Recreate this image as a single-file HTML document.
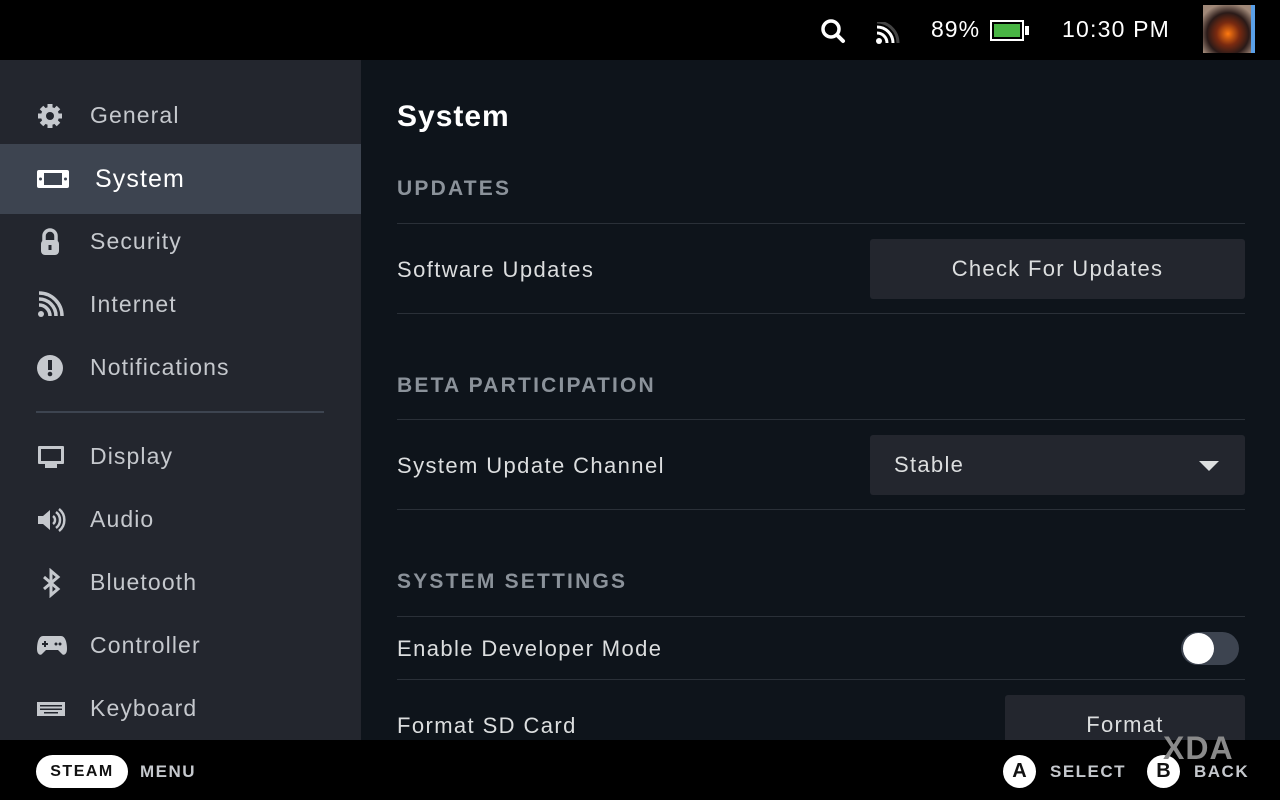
<!DOCTYPE html>
<html><head><meta charset="utf-8"><style>
*{margin:0;padding:0;box-sizing:border-box}
body{width:1280px;height:800px;overflow:hidden;background:#0e141b;font-family:"Liberation Sans","DejaVu Sans",sans-serif;position:relative;color:#dcdedf}
.top{position:absolute;left:0;top:0;width:1280px;height:60px;background:#000}
.side{position:absolute;left:0;top:60px;width:361px;height:680px;background:#23262e}
.item{position:absolute;left:0;width:361px;height:63px;display:flex;align-items:center;font-size:23px;color:#c5c8cd;letter-spacing:1.1px}
.item svg{position:absolute;left:36px}
.item span{position:absolute;left:90px}
.sel{background:#3d4450;color:#fff;height:70px}
.sel span{left:95px;font-size:25px}
.bot{position:absolute;left:0;top:740px;width:1280px;height:60px;background:#000}
.main{position:absolute;left:397px;top:60px;width:848px}
.h1{position:absolute;top:40px;font-size:30px;font-weight:bold;color:#fff;letter-spacing:1px}
.sec{position:absolute;font-size:21px;font-weight:bold;letter-spacing:2.2px;color:#8b929a}
.line{position:absolute;left:0;width:848px;height:1px;background:#2a3038}
.lbl{position:absolute;font-size:22px;color:#dcdedf;letter-spacing:1.4px}
.btn{position:absolute;background:#23262e;border-radius:3px;font-size:22px;color:#dcdedf;display:flex;align-items:center;justify-content:center;letter-spacing:1.3px}
</style></head><body>
<div class="top">
<svg style="position:absolute;left:820px;top:18px" width="26" height="26" viewBox="0 0 26 26"><circle cx="11" cy="11" r="8" stroke="#fff" stroke-width="3.5" fill="none"/><path d="M17 17l6 6" stroke="#fff" stroke-width="4" stroke-linecap="round"/></svg>
<svg style="position:absolute;left:876px;top:22px" width="24" height="22" viewBox="0 0 24 22"><circle cx="3" cy="19" r="3" fill="#fff"/><path d="M1 11a10 10 0 0 1 10 10M1 5a16 16 0 0 1 16 16" stroke="#fff" stroke-width="3" fill="none"/><path d="M1 0a21 21 0 0 1 21 21" stroke="#444" stroke-width="3" fill="none"/></svg>
<div style="position:absolute;left:931px;top:16px;font-size:23px;color:#fff;letter-spacing:1px">89%</div>
<div style="position:absolute;left:990px;top:20px;width:34px;height:21px;border:2.5px solid #fff;padding:2px"><div style="width:100%;height:100%;background:#49b544"></div></div>
<div style="position:absolute;left:1025px;top:26px;width:4px;height:9px;background:#fff"></div>
<div style="position:absolute;left:1062px;top:16px;font-size:23px;color:#fff;letter-spacing:1.2px">10:30 PM</div>
<div style="position:absolute;left:1203px;top:5px;width:50px;height:48px;background:radial-gradient(circle at 50% 60%,#ff7a10 0,#7a2a10 30%,#2a1a18 55%,#a08878 80%);"></div>
<div style="position:absolute;left:1251px;top:5px;width:4px;height:48px;background:#5aa0e8"></div>
</div>
<div class="side">
<div class="item" style="top:24px"><svg width="28" height="28" viewBox="0 0 28 28"><circle cx="14" cy="14" r="9" fill="#c5c8cd"/><g stroke="#c5c8cd" stroke-width="5"><path d="M14 2v24M2 14h24M5.5 5.5l17 17M22.5 5.5l-17 17"/></g><circle cx="14" cy="14" r="4" fill="#23262e"/></svg><span>General</span></div>
<div class="item sel" style="top:84px"><svg width="34" height="20" viewBox="0 0 34 20"><rect x="1" y="1" width="32" height="18" rx="2" fill="#fff"/><rect x="8" y="4" width="18" height="12" fill="#3d4450"/><circle cx="4.5" cy="10" r="1.5" fill="#3d4450"/><circle cx="29.5" cy="10" r="1.5" fill="#3d4450"/></svg><span>System</span></div>
<div class="item" style="top:150px"><svg width="28" height="30" viewBox="0 0 28 30"><path d="M8 14V9a6 6 0 0 1 12 0v5" stroke="#c5c8cd" stroke-width="3.5" fill="none"/><rect x="5" y="13" width="18" height="15" rx="4" fill="#c5c8cd"/><rect x="12.5" y="18" width="3" height="5" fill="#23262e"/></svg><span>Security</span></div>
<div class="item" style="top:213px"><svg width="28" height="28" viewBox="0 0 28 28"><circle cx="5" cy="23" r="3" fill="#c5c8cd"/><path d="M3 14a11 11 0 0 1 11 11M3 8a17 17 0 0 1 17 17M3 2a23 23 0 0 1 23 23" stroke="#c5c8cd" stroke-width="3.5" fill="none"/></svg><span>Internet</span></div>
<div class="item" style="top:276px"><svg width="28" height="28" viewBox="0 0 28 28"><circle cx="14" cy="14" r="13" fill="#c5c8cd"/><rect x="12" y="6" width="4" height="10" fill="#23262e"/><circle cx="14" cy="20" r="2.3" fill="#23262e"/></svg><span>Notifications</span></div>
<div style="position:absolute;left:36px;top:351px;width:288px;height:2px;background:#3d4450"></div>
<div class="item" style="top:365px"><svg width="30" height="28" viewBox="0 0 30 28"><rect x="2" y="3" width="26" height="18" rx="1" fill="#c5c8cd"/><rect x="5" y="6" width="20" height="12" fill="#23262e"/><rect x="9" y="21" width="12" height="4" fill="#c5c8cd"/></svg><span>Display</span></div>
<div class="item" style="top:428px"><svg width="30" height="28" viewBox="0 0 30 28"><path d="M2 10h5l7-6v20l-7-6H2z" fill="#c5c8cd"/><path d="M17 10a5 5 0 0 1 0 8M20 6a10 10 0 0 1 0 16M23 3a14 14 0 0 1 0 22" stroke="#c5c8cd" stroke-width="2.5" fill="none"/></svg><span>Audio</span></div>
<div class="item" style="top:491px"><svg width="30" height="30" viewBox="0 0 30 30"><path d="M8 9l14 12-7 6V3l7 6-14 12" stroke="#c5c8cd" stroke-width="3" fill="none"/></svg><span>Bluetooth</span></div>
<div class="item" style="top:554px"><svg width="32" height="26" viewBox="0 0 32 26"><path d="M7 3h18c4 0 6 6 6 13 0 5-3 7-5 5l-4-4H10l-4 4c-2 2-5 0-5-5C1 9 3 3 7 3z" fill="#c5c8cd"/><path d="M6 11h6M9 8v6" stroke="#23262e" stroke-width="2"/><circle cx="20" cy="11" r="1.5" fill="#23262e"/><circle cx="24" cy="11" r="1.5" fill="#23262e"/></svg><span>Controller</span></div>
<div class="item" style="top:617px"><svg width="30" height="24" viewBox="0 0 30 24"><rect x="1" y="5" width="28" height="14" fill="#c5c8cd"/><g fill="#23262e"><rect x="4" y="8" width="22" height="1.5"/><rect x="4" y="11.5" width="22" height="1.5"/><rect x="8" y="15" width="14" height="1.5"/></g></svg><span>Keyboard</span></div>
</div>
<div class="main">
<div class="h1">System</div>
<div class="sec" style="top:117px">UPDATES</div>
<div class="line" style="top:163px"></div>
<div class="lbl" style="top:197px">Software Updates</div>
<div class="btn" style="left:473px;top:179px;width:375px;height:60px">Check For Updates</div>
<div class="line" style="top:253px"></div>
<div class="sec" style="top:314px">BETA PARTICIPATION</div>
<div class="line" style="top:359px"></div>
<div class="lbl" style="top:393px">System Update Channel</div>
<div class="btn" style="left:473px;top:375px;width:375px;height:60px;justify-content:flex-start;padding-left:24px">Stable<svg style="position:absolute;right:26px;top:26px" width="20" height="10" viewBox="0 0 20 10"><path d="M0 0h20L10 10z" fill="#dcdedf"/></svg></div>
<div class="line" style="top:449px"></div>
<div class="sec" style="top:510px">SYSTEM SETTINGS</div>
<div class="line" style="top:556px"></div>
<div class="lbl" style="top:576px">Enable Developer Mode</div>
<div style="position:absolute;left:784px;top:572px;width:58px;height:33px;border-radius:17px;background:#3d4450"><div style="position:absolute;left:2px;top:1px;width:31px;height:31px;border-radius:50%;background:#fff"></div></div>
<div class="line" style="top:619px"></div>
<div class="lbl" style="top:653px">Format SD Card</div>
<div class="btn" style="left:608px;top:635px;width:240px;height:60px">Format</div>
</div>
<div class="bot">
<div style="position:absolute;left:36px;top:15px;width:92px;height:33px;border-radius:17px;background:#fff;color:#111;font-weight:bold;font-size:16px;letter-spacing:1.5px;display:flex;align-items:center;justify-content:center">STEAM</div>
<div style="position:absolute;left:140px;top:22px;font-size:17px;font-weight:bold;letter-spacing:1.5px;color:#c5c8cd">MENU</div>
<div style="position:absolute;left:1003px;top:15px;width:33px;height:33px;border-radius:50%;background:#fff;color:#111;font-weight:bold;font-size:20px;display:flex;align-items:center;justify-content:center">A</div>
<div style="position:absolute;left:1050px;top:22px;font-size:17px;font-weight:bold;letter-spacing:1.5px;color:#c5c8cd">SELECT</div>
<div style="position:absolute;left:1147px;top:15px;width:33px;height:33px;border-radius:50%;background:#fff;color:#111;font-weight:bold;font-size:20px;display:flex;align-items:center;justify-content:center">B</div>
<div style="position:absolute;left:1194px;top:22px;font-size:17px;font-weight:bold;letter-spacing:1.5px;color:#c5c8cd">BACK</div>
<div style="position:absolute;left:1163px;top:-10px;font-size:32px;font-weight:bold;color:#8a8a8a;letter-spacing:1px">XDA</div>
</div>
</body></html>
